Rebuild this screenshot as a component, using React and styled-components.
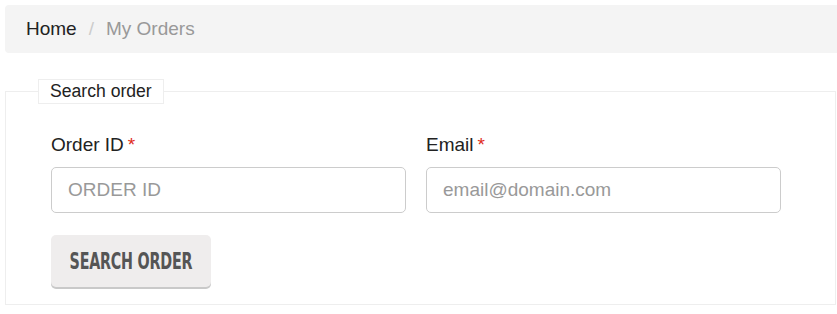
import React from "react";
import styled, { createGlobalStyle } from "styled-components";

const GlobalStyle = createGlobalStyle`
  html, body {
    margin: 0;
    padding: 0;
    background: #ffffff;
    font-family: "Liberation Sans", Arial, sans-serif;
    overflow: hidden;
  }
`;

const Page = styled.div`
  width: 837px;
  padding: 5px 0 0 5px;
  box-sizing: border-box;
`;

const Breadcrumb = styled.nav`
  display: flex;
  align-items: center;
  height: 48px;
  margin-right: -20px;
  padding-left: 21px;
  background: #f4f4f4;
  border-radius: 4px;
  font-size: 19px;
`;

const Crumb = styled.span`
  color: ${(p) => (p.$active ? "#999999" : "#222222")};
`;

const Divider = styled.span`
  color: #cccccc;
  padding: 0 12px;
`;

const Fieldset = styled.fieldset`
  margin: 26px 0 0 0;
  width: 831px;
  box-sizing: border-box;
  padding: 0;
  border: 1px solid #eeeeee;
  min-width: 0;
`;

const Legend = styled.legend`
  margin-left: 32px;
  padding: 0 11px;
  border: 1px solid #eeeeee;
  font-size: 17.6px;
  line-height: 23px;
  color: #222222;
`;

const Body = styled.div`
  padding: 29px 0 17px 45px;
`;

const Row = styled.div`
  display: flex;
  gap: 20px;
`;

const Field = styled.div`
  display: flex;
  flex-direction: column;
  width: 355px;
`;

const Label = styled.label`
  font-size: 19px;
  line-height: 24px;
  color: #222222;
  margin-bottom: 10px;
`;

const Required = styled.span`
  color: #e02b1b;
  margin-left: 4px;
`;

const Input = styled.input`
  height: 46px;
  box-sizing: border-box;
  border: 1px solid #cccccc;
  border-radius: 5px;
  padding: 0 16px;
  font-family: "Liberation Sans", Arial, sans-serif;
  font-size: 19px;
  color: #333333;
  outline: none;
  &::placeholder {
    color: #999999;
  }
`;

const Button = styled.button`
  display: flex;
  align-items: center;
  justify-content: center;
  margin-top: 22px;
  width: 160px;
  height: 52px;
  border: none;
  border-radius: 5px;
  background: #efeded;
  box-shadow: 0 2px 0 #c9c9c9;
  color: #555555;
  cursor: pointer;
  padding: 0;
`;

const ButtonText = styled.span`
  flex: none;
  display: inline-block;
  font-family: "Liberation Sans Narrow", "DejaVu Sans Condensed", sans-serif;
  font-weight: 700;
  font-size: 23px;
  letter-spacing: -0.3px;
  text-transform: uppercase;
  transform: scaleX(0.69);
  white-space: nowrap;
`;

export default function App() {
  return (
    <Page>
      <GlobalStyle />
      <Breadcrumb>
        <Crumb>Home</Crumb>
        <Divider>/</Divider>
        <Crumb $active>My Orders</Crumb>
      </Breadcrumb>
      <Fieldset>
        <Legend>Search order</Legend>
        <Body>
          <Row>
            <Field>
              <Label>
                Order ID<Required>*</Required>
              </Label>
              <Input placeholder="ORDER ID" />
            </Field>
            <Field>
              <Label>
                Email<Required>*</Required>
              </Label>
              <Input placeholder="email@domain.com" />
            </Field>
          </Row>
          <Button>
            <ButtonText>Search order</ButtonText>
          </Button>
        </Body>
      </Fieldset>
    </Page>
  );
}
